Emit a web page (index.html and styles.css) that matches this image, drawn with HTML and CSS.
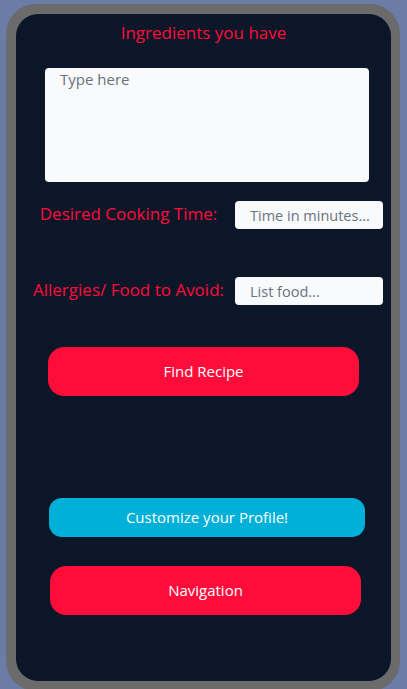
FILE: index.html
```html
<!DOCTYPE html>
<html>
<head>
<meta charset="utf-8">
<link rel="stylesheet" href="styles.css">
</head>
<body>
<div class="phone">
  <div class="screen">
    <h1 class="title">Ingredients you have</h1>
    <textarea class="ingredients" placeholder="Type here"></textarea>
    <div class="field-row row-time">
      <label class="field-label">Desired Cooking Time:</label>
      <input class="field-input" type="text" placeholder="Time in minutes...">
    </div>
    <div class="field-row row-allergy">
      <label class="field-label">Allergies/ Food to Avoid:</label>
      <input class="field-input" type="text" placeholder="List food...">
    </div>
    <button class="btn btn-red btn-find">Find Recipe</button>
    <button class="btn btn-cyan btn-profile">Customize your Profile!</button>
    <button class="btn btn-red btn-nav">Navigation</button>
  </div>
</div>
</body>
</html>
```
FILE: styles.css
```css
html, body {
  margin: 0;
  padding: 0;
  background: #6b7ca6;
  height: 100%;
  overflow: hidden;
}
body {
  font-family: "Open Sans", "Noto Sans", sans-serif;
}
.phone {
  margin: 4px 7px 0 6px;
  border: 10px solid #6b6b6b;
  border-right-width: 9px;
  border-radius: 30px;
  background: #6b6b6b;
}
.screen {
  background: #0b1628;
  border-radius: 22px;
  height: 667px;
  display: flex;
  flex-direction: column;
  align-items: flex-start;
}
.title {
  margin: 8px 0 0 0;
  align-self: stretch;
  text-align: center;
  font-size: 17px;
  font-weight: 400;
  line-height: 22px;
  color: #ff0d3a;
}
.ingredients {
  margin: 24px 0 0 29px;
  width: 324px;
  height: 114px;
  box-sizing: border-box;
  border: none;
  border-radius: 4px;
  background: #f8fafc;
  padding: 1px 15px 0 15px;
  font-family: inherit;
  font-size: 15px;
  resize: none;
  outline: none;
}
.ingredients::placeholder, .field-input::placeholder {
  color: #6b7280;
}
.field-row {
  display: grid;
  grid-template-columns: 213px 148px;
  align-items: center;
  margin-left: 6px;
}
.row-time { margin-top: 19px; }
.row-allergy { margin-top: 48px; }
.field-label {
  text-align: center;
  color: #ff0d3a;
  font-size: 17px;
  line-height: 22px;
  padding-bottom: 3px;
  white-space: nowrap;
}
.field-input {
  width: 148px;
  height: 28px;
  box-sizing: border-box;
  border: none;
  border-radius: 4px;
  background: #f8fafc;
  padding: 0 0 0 15px;
  font-family: inherit;
  font-size: 14.5px;
  outline: none;
}
.btn {
  border: none;
  color: #ffffff;
  font-family: inherit;
  font-size: 15px;
  padding: 0 0 1px 0;
  cursor: pointer;
}
.btn-red { background: #ff0d3a; }
.btn-cyan { background: #00b0d8; }
.btn-find {
  margin: 42px 0 0 32px;
  width: 311px;
  height: 49px;
  border-radius: 16px;
}
.btn-profile {
  margin: 102px 0 0 33px;
  width: 316px;
  height: 39px;
  border-radius: 13px;
}
.btn-nav {
  margin: 29px 0 0 34px;
  width: 311px;
  height: 49px;
  border-radius: 16px;
}
```
